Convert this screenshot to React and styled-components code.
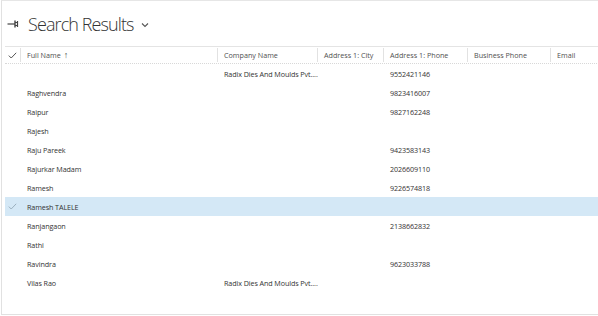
import styled, { createGlobalStyle } from "styled-components";

const GlobalStyle = createGlobalStyle`
  html, body {
    margin: 0;
    padding: 0;
    background: #fff;
  }
  body {
    font-family: "Open Sans", "Noto Sans", sans-serif;
    color: #262626;
  }
`;

const columns = [
  { key: "name", label: "Full Name", width: 197, sort: true },
  { key: "company", label: "Company Name", width: 100 },
  { key: "city", label: "Address 1: City", width: 66 },
  { key: "phone", label: "Address 1: Phone", width: 84 },
  { key: "business", label: "Business Phone", width: 83 },
  { key: "email", label: "Email", width: 60 },
];

const rows = [
  { name: "", company: "Radix Dies And Moulds Pvt....", phone: "9552421146" },
  { name: "Raghvendra", phone: "9823416007" },
  { name: "Raipur", phone: "9827162248" },
  { name: "Rajesh" },
  { name: "Raju Pareek", phone: "9423583143" },
  { name: "Rajurkar Madam", phone: "2026609110" },
  { name: "Ramesh", phone: "9226574818" },
  { name: "Ramesh TALELE", selected: true },
  { name: "Ranjangaon", phone: "2138662832" },
  { name: "Rathi" },
  { name: "Ravindra", phone: "9623033788" },
  { name: "Vilas Rao", company: "Radix Dies And Moulds Pvt...." },
];

function App() {
  return (
    <>
      <GlobalStyle />
      <Frame>
        <TitleBar>
          <PinIcon width="12" height="10" viewBox="0 0 12 10">
            <path d="M0.5 5 H8" stroke="#444" strokeWidth="1.2" />
            <path d="M8 1.5 V8.5" stroke="#444" strokeWidth="1.4" />
            <path d="M10.5 2 V8" stroke="#444" strokeWidth="1.2" />
            <path d="M8 3.5 H10.5 M8 6.5 H10.5" stroke="#444" strokeWidth="1" />
          </PinIcon>
          <Title>Search Results</Title>
          <Chevron width="8" height="6" viewBox="0 0 8 6">
            <path d="M1 1.5 L4 4.5 L7 1.5" fill="none" stroke="#555" strokeWidth="1.1" />
          </Chevron>
        </TitleBar>

        <Grid>
          <HeaderRow>
            <CheckCell>
              <CheckMark width="9" height="7" viewBox="0 0 9 7">
                <path d="M0.8 3.6 L3.2 6 L8.2 0.8" fill="none" stroke="#555" strokeWidth="1" />
              </CheckMark>
            </CheckCell>
            {columns.map((c) => (
              <HeaderCell key={c.key} $width={c.width}>
                {c.label}
                {c.sort && <SortArrow>↑</SortArrow>}
              </HeaderCell>
            ))}
          </HeaderRow>

          {rows.map((r, i) => (
            <Row key={i} $selected={r.selected}>
              <CheckCell>
                {r.selected && (
                  <CheckMark width="9" height="7" viewBox="0 0 9 7">
                    <path d="M0.8 3.6 L3.2 6 L8.2 0.8" fill="none" stroke="#9bb0bf" strokeWidth="1" />
                  </CheckMark>
                )}
              </CheckCell>
              {columns.map((c) => (
                <Cell key={c.key} $width={c.width}>
                  {r[c.key] || ""}
                </Cell>
              ))}
            </Row>
          ))}
        </Grid>
      </Frame>
    </>
  );
}

const Frame = styled.div`
  width: 597px;
  height: 313px;
  margin-left: 1px;
  border-top: 1px solid #e6e6e6;
  border-left: 1px solid #e1e1e1;
  border-bottom: 1px solid #e1e1e1;
  overflow: hidden;
  display: flex;
  flex-direction: column;
`;

const TitleBar = styled.div`
  height: 45px;
  display: flex;
  align-items: center;
  padding-left: 5px;
`;

const PinIcon = styled.svg`
  margin-right: 9px;
  margin-top: 1px;
`;

const Title = styled.div`
  font-size: 18px;
  font-weight: 300;
  letter-spacing: -0.9px;
  color: #333;
`;

const Chevron = styled.svg`
  margin-left: 7px;
  margin-top: 2px;
`;

const Grid = styled.div`
  display: flex;
  flex-direction: column;
  padding-left: 3px;
`;

const HeaderRow = styled.div`
  display: flex;
  align-items: center;
  height: 16px;
  border-top: 1px solid #e4e4e4;
  border-bottom: 1px dotted #d8d8d8;
`;

const CheckCell = styled.div`
  width: 15px;
  flex: none;
  display: flex;
  align-items: center;
  justify-content: center;
`;

const CheckMark = styled.svg`
  display: block;
`;

const HeaderCell = styled.div`
  width: ${(p) => p.$width}px;
  flex: none;
  box-sizing: border-box;
  height: 14px;
  line-height: 14px;
  padding-left: 6px;
  border-left: 1px solid #e2e2e2;
  font-size: 7.2px;
  color: #505050;
  white-space: nowrap;
  overflow: hidden;
`;

const SortArrow = styled.span`
  margin-left: 3px;
  font-size: 9px;
`;

const Row = styled.div`
  display: flex;
  align-items: center;
  height: 19px;
  background: ${(p) => (p.$selected ? "#d4e8f6" : "transparent")};
`;

const Cell = styled.div`
  width: ${(p) => p.$width}px;
  flex: none;
  box-sizing: border-box;
  padding-left: 7px;
  font-size: 7.2px;
  letter-spacing: -0.1px;
  color: #333;
  white-space: nowrap;
`;

export default App;
